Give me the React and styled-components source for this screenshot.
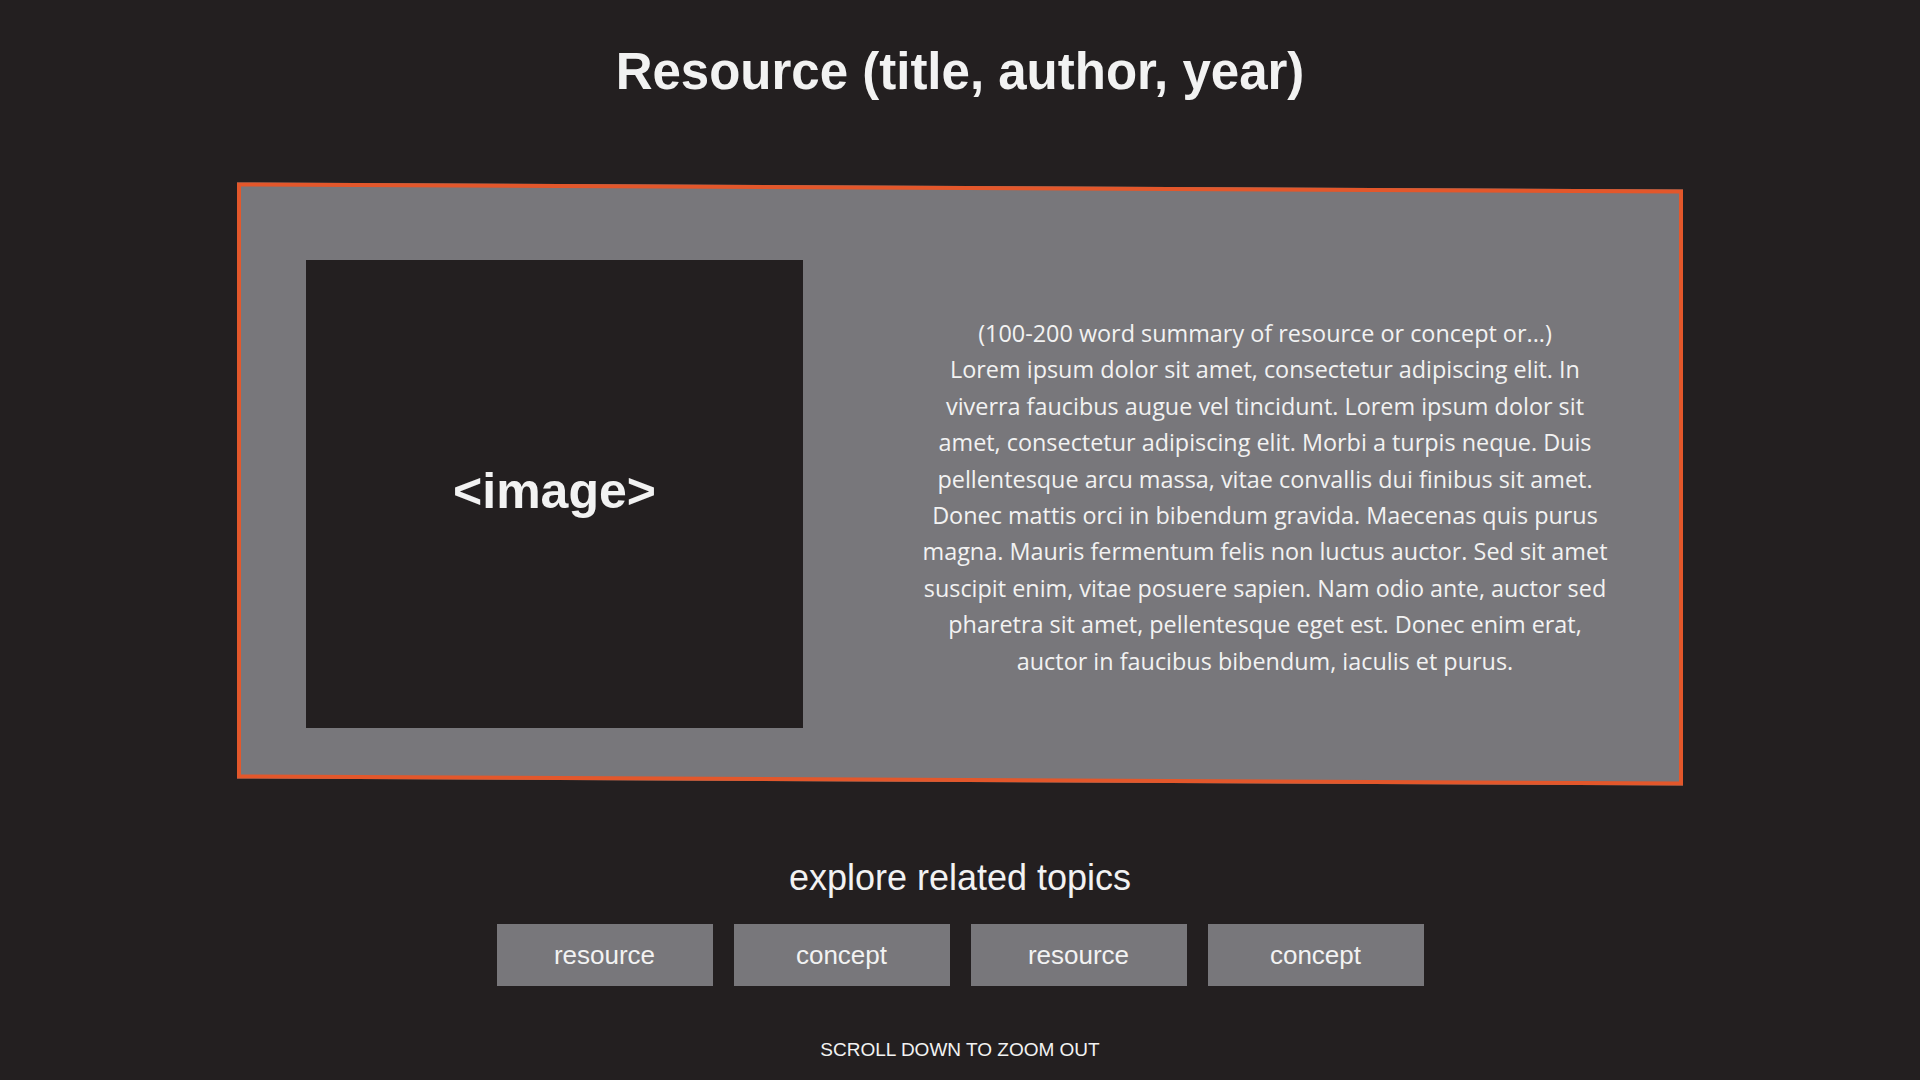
import React from 'react'
import styled, { createGlobalStyle } from 'styled-components'

const colors = {
  bg: '#231f20',
  grey: '#78777b',
  orange: '#e3572b',
  light: '#f2f2f2'
}

const GlobalStyle = createGlobalStyle`
  html, body {
    margin: 0;
    padding: 0;
    background: ${colors.bg};
  }
  body {
    font-family: "Liberation Sans", Arial, sans-serif;
    color: ${colors.light};
  }
`

const Page = styled.main`
  min-height: 100vh;
  box-sizing: border-box;
  padding-top: 42px;
  display: flex;
  flex-direction: column;
  align-items: center;
`

const Title = styled.h1`
  margin: 0;
  font-size: 51px;
  line-height: 60px;
  font-weight: 700;
  color: ${colors.light};
`

const Card = styled.section`
  position: relative;
  isolation: isolate;
  margin-top: 84px;
  width: 1446px;
  height: 596px;
  box-sizing: border-box;
  padding: 74px 68px 54px 69px;
  display: grid;
  grid-template-columns: 497px 1fr;
  column-gap: 112px;

  &::before {
    content: '';
    position: absolute;
    inset: 0;
    z-index: -1;
    background: ${colors.grey};
    border: 4px solid ${colors.orange};
    transform: skewY(0.28deg);
  }
`

const ImageBox = styled.div`
  background: ${colors.bg};
  display: flex;
  align-items: center;
  justify-content: center;
  font-size: 50px;
  font-weight: 700;
  color: ${colors.light};
  padding-bottom: 6px;
  box-sizing: border-box;
`

const Summary = styled.p`
  margin: 0;
  align-self: center;
  padding-top: 6px;
  text-align: center;
  font-family: "Open Sans", "Liberation Sans", sans-serif;
  font-size: 23.4px;
  line-height: 36.4px;
  white-space: nowrap;
  color: ${colors.light};
`

const Explore = styled.h2`
  margin: 74px 0 0;
  font-size: 36px;
  line-height: 44px;
  font-weight: 400;
  color: ${colors.light};
`

const Topics = styled.nav`
  margin-top: 24px;
  display: flex;
  gap: 21px;
`

const Topic = styled.a`
  width: 216px;
  height: 62px;
  display: flex;
  align-items: center;
  justify-content: center;
  background: ${colors.grey};
  color: ${colors.light};
  font-size: 26px;
  text-decoration: none;
  cursor: pointer;
`

const Hint = styled.p`
  margin: 52px 0 0;
  font-size: 19px;
  line-height: 24px;
  color: ${colors.light};
`

const summaryLines = [
  '(100-200 word summary of resource or concept or...)',
  'Lorem ipsum dolor sit amet, consectetur adipiscing elit. In',
  'viverra faucibus augue vel tincidunt. Lorem ipsum dolor sit',
  'amet, consectetur adipiscing elit. Morbi a turpis neque. Duis',
  'pellentesque arcu massa, vitae convallis dui finibus sit amet.',
  'Donec mattis orci in bibendum gravida. Maecenas quis purus',
  'magna. Mauris fermentum felis non luctus auctor. Sed sit amet',
  'suscipit enim, vitae posuere sapien. Nam odio ante, auctor sed',
  'pharetra sit amet, pellentesque eget est. Donec enim erat,',
  'auctor in faucibus bibendum, iaculis et purus.'
]

const topics = ['resource', 'concept', 'resource', 'concept']

const App = () => (
  <>
    <GlobalStyle />
    <Page>
      <Title>Resource (title, author, year)</Title>
      <Card>
        <ImageBox>&lt;image&gt;</ImageBox>
        <Summary>
          {summaryLines.map((line, i) => (
            <React.Fragment key={i}>
              {line}
              {i < summaryLines.length - 1 && <br />}
            </React.Fragment>
          ))}
        </Summary>
      </Card>
      <Explore>explore related topics</Explore>
      <Topics>
        {topics.map((t, i) => <Topic key={i}>{t}</Topic>)}
      </Topics>
      <Hint>SCROLL DOWN TO ZOOM OUT</Hint>
    </Page>
  </>
)

export default App
